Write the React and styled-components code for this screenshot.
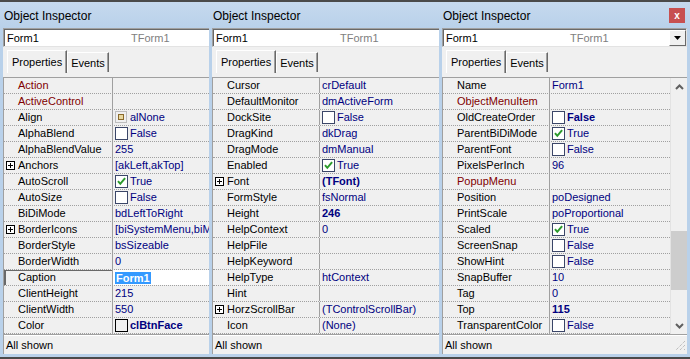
import React from 'react';
import styled, { createGlobalStyle } from 'styled-components';

const GlobalStyle = createGlobalStyle`
  html, body {
    margin: 0;
    padding: 0;
    background: #b9d1ea;
  }
  body {
    font-family: "Liberation Sans", Arial, sans-serif;
    font-size: 11px;
  }
`;

const panels = [
  {
    width: 206,
    nameWidth: 109,
    cut: true,
    rows: [
      { name: 'Action', event: true },
      { name: 'ActiveControl', event: true },
      { name: 'Align', kind: 'align', value: 'alNone' },
      { name: 'AlphaBlend', kind: 'check', checked: false, value: 'False' },
      { name: 'AlphaBlendValue', value: '255' },
      { name: 'Anchors', expand: true, value: '[akLeft,akTop]' },
      { name: 'AutoScroll', kind: 'check', checked: true, value: 'True' },
      { name: 'AutoSize', kind: 'check', checked: false, value: 'False' },
      { name: 'BiDiMode', value: 'bdLeftToRight' },
      { name: 'BorderIcons', expand: true, value: '[biSystemMenu,biMi' },
      { name: 'BorderStyle', value: 'bsSizeable' },
      { name: 'BorderWidth', value: '0' },
      { name: 'Caption', selected: true, value: 'Form1' },
      { name: 'ClientHeight', value: '215' },
      { name: 'ClientWidth', value: '550' },
      { name: 'Color', kind: 'color', value: 'clBtnFace', bold: true },
    ],
  },
  {
    width: 227,
    nameWidth: 107,
    cut: true,
    rows: [
      { name: 'Cursor', value: 'crDefault' },
      { name: 'DefaultMonitor', value: 'dmActiveForm' },
      { name: 'DockSite', kind: 'check', checked: false, value: 'False' },
      { name: 'DragKind', value: 'dkDrag' },
      { name: 'DragMode', value: 'dmManual' },
      { name: 'Enabled', kind: 'check', checked: true, value: 'True' },
      { name: 'Font', expand: true, value: '(TFont)', bold: true },
      { name: 'FormStyle', value: 'fsNormal' },
      { name: 'Height', value: '246', bold: true },
      { name: 'HelpContext', value: '0' },
      { name: 'HelpFile' },
      { name: 'HelpKeyword' },
      { name: 'HelpType', value: 'htContext' },
      { name: 'Hint' },
      { name: 'HorzScrollBar', expand: true, value: '(TControlScrollBar)' },
      { name: 'Icon', value: '(None)' },
    ],
  },
  {
    width: 245,
    nameWidth: 107,
    cut: false,
    closable: true,
    scroll: true,
    rows: [
      { name: 'Name', value: 'Form1' },
      { name: 'ObjectMenuItem', event: true },
      { name: 'OldCreateOrder', kind: 'check', checked: false, value: 'False', bold: true },
      { name: 'ParentBiDiMode', kind: 'check', checked: true, value: 'True' },
      { name: 'ParentFont', kind: 'check', checked: false, value: 'False' },
      { name: 'PixelsPerInch', value: '96' },
      { name: 'PopupMenu', event: true },
      { name: 'Position', value: 'poDesigned' },
      { name: 'PrintScale', value: 'poProportional' },
      { name: 'Scaled', kind: 'check', checked: true, value: 'True' },
      { name: 'ScreenSnap', kind: 'check', checked: false, value: 'False' },
      { name: 'ShowHint', kind: 'check', checked: false, value: 'False' },
      { name: 'SnapBuffer', value: '10' },
      { name: 'Tag', value: '0' },
      { name: 'Top', value: '115', bold: true },
      { name: 'TransparentColor', kind: 'check', checked: false, value: 'False' },
    ],
  },
];

const Window = styled.div`
  width: 690px;
  height: 359px;
  box-sizing: border-box;
  border-top: 2px solid #4a4a4a;
  border-bottom: 2px solid #4a4a4a;
  background: linear-gradient(#c6d9ee, #b9d1ea 26px);
  display: flex;
  gap: 3px;
  padding: 0 3px 3px;
`;

const Panel = styled.div`
  width: ${(p) => p.$width}px;
  flex: none;
  display: flex;
  flex-direction: column;
`;

const TitleBar = styled.div`
  height: 26px;
  flex: none;
  display: flex;
  align-items: center;
  justify-content: space-between;
  padding: 1px 0 0 1px;
  box-sizing: border-box;
  font-size: 12px;
  color: #000;
`;

const CloseButton = styled.div`
  width: 16px;
  height: 15px;
  margin: 0 2px 0 0;
  background: #c75050;
  color: #fff;
  font-weight: bold;
  font-size: 10px;
  display: flex;
  align-items: center;
  justify-content: center;
`;

const Body = styled.div`
  flex: 1;
  display: flex;
  flex-direction: column;
  background: #f0f0f0;
`;

const Combo = styled.div`
  height: 19px;
  box-sizing: border-box;
  display: flex;
  align-items: center;
  background: #fff;
  border-top: 1px solid #a0a0a0;
  border-left: 1px solid #a0a0a0;
  border-bottom: 1px solid #e3e3e3;
  border-right: ${(p) => (p.$cut ? 'none' : '1px solid #e3e3e3')};
  box-shadow: inset 1px 1px 0 #696969;
  padding-left: 3px;
  color: #000;
`;

const ComboName = styled.span`
  width: 124px;
  flex: none;
`;

const ComboType = styled.span`
  flex: 1;
  color: #808080;
`;

const DropButton = styled.div`
  width: 17px;
  height: 16px;
  margin-top: 1px;
  box-sizing: border-box;
  background: #f0f0f0;
  border-top: 1px solid #fff;
  border-left: 1px solid #fff;
  border-right: 1px solid #696969;
  border-bottom: 1px solid #696969;
  display: flex;
  align-items: center;
  justify-content: center;
`;

const TabStrip = styled.div`
  height: 29px;
  flex: none;
  display: flex;
  align-items: flex-start;
  padding: 3px 0 0 4px;
  box-sizing: border-box;
`;

const Tab = styled.div`
  height: ${(p) => (p.$active ? 23 : 20)}px;
  margin-top: ${(p) => (p.$active ? 0 : 2)}px;
  box-sizing: border-box;
  padding: 0 ${(p) => (p.$active ? 4 : 3)}px;
  display: flex;
  align-items: center;
  border-top: 1px solid #fff;
  border-left: 1px solid #fff;
  border-right: 1px solid #696969;
  box-shadow: inset -1px 0 0 #a0a0a0;
  color: #000;
`;

const GridArea = styled.div`
  flex: 1;
  display: flex;
  border-top: 1px solid #a0a0a0;
  border-left: 1px solid #a0a0a0;
  margin-top: 1px;
`;

const Rows = styled.div`
  flex: 1;
  display: flex;
  flex-direction: column;
  min-width: 0;
`;

const Row = styled.div`
  display: grid;
  grid-template-columns: ${(p) => p.$nameWidth}px 1fr;
  height: 16px;
  box-sizing: border-box;
  border-bottom: 1px dotted #a0a0a0;
  line-height: 15px;
`;

const NameCell = styled.div`
  display: flex;
  align-items: center;
  padding-left: 2px;
  border-right: 1px solid #a0a0a0;
  color: ${(p) => (p.$event ? '#800000' : '#000')};
  white-space: nowrap;
  overflow: hidden;
  ${(p) => p.$selected && 'box-shadow: inset 2px 1px 0 #696969;'}
`;

const ExpandSlot = styled.span`
  width: 12px;
  flex: none;
  display: flex;
  align-items: center;
`;

const ValueCell = styled.div`
  display: flex;
  align-items: center;
  gap: 2px;
  padding-left: 2px;
  color: #000080;
  font-weight: ${(p) => (p.$bold ? 'bold' : 'normal')};
  background: ${(p) => (p.$selected ? '#fff' : 'transparent')};
  white-space: nowrap;
  overflow: hidden;
`;

const Highlight = styled.span`
  background: #3399ff;
  color: #fff;
  font-weight: bold;
  line-height: 12px;
  padding: 0 1px;
`;

const ScrollBar = styled.div`
  width: 16px;
  flex: none;
  display: flex;
  flex-direction: column;
  border-left: 1px solid #e3e3e3;
`;

const ArrowButton = styled.div`
  height: 17px;
  flex: none;
  display: flex;
  align-items: center;
  justify-content: center;
`;

const Track = styled.div`
  flex: 1;
`;

const Thumb = styled.div`
  margin: ${(p) => p.$offset}px 0 0 0;
  height: ${(p) => p.$size}px;
  background: #cdcdcd;
`;

const StatusBar = styled.div`
  height: 20px;
  flex: none;
  box-sizing: border-box;
  display: flex;
  align-items: center;
  justify-content: space-between;
  padding-left: 2px;
  border-top: 1px solid #a0a0a0;
  border-left: 1px solid #a0a0a0;
  box-shadow: inset 0 1px 0 #fff;
  color: #000;
`;

const PlusBox = () => (
  <svg width="9" height="9" viewBox="0 0 9 9">
    <rect x="0.5" y="0.5" width="8" height="8" fill="#fff" stroke="#000" />
    <path d="M2 4.5h5M4.5 2v5" stroke="#000" />
  </svg>
);

const CheckBox = ({ checked }) => (
  <svg width="13" height="13" viewBox="0 0 13 13">
    <rect x="0.5" y="0.5" width="12" height="12" fill="#fff" stroke="#3b4668" />
    {checked && (
      <path d="M3 6.2l2.3 2.6 4.8-5.6" fill="none" stroke="#2c9a2c" strokeWidth="2" />
    )}
  </svg>
);

const AlignIcon = () => (
  <svg width="13" height="13" viewBox="0 0 13 13">
    <rect x="0.5" y="0.5" width="11" height="11" fill="none" stroke="#8a8a8a" strokeDasharray="1 1" />
    <rect x="3.5" y="3.5" width="5" height="5" fill="#e8d8a0" stroke="#8b6a2b" />
  </svg>
);

const ColorSwatch = () => (
  <svg width="13" height="13" viewBox="0 0 13 13">
    <rect x="0.5" y="0.5" width="12" height="12" fill="#f0f0f0" stroke="#000" />
  </svg>
);

const Chevron = ({ down }) => (
  <svg width="9" height="6" viewBox="0 0 9 6">
    <path d={down ? 'M1 1l3.5 3.5L8 1' : 'M1 5l3.5-3.5L8 5'} fill="none" stroke="#606060" strokeWidth="2" />
  </svg>
);

const Grip = () => (
  <svg width="12" height="12" viewBox="0 0 12 12" style={{ marginRight: 1 }}>
    <path d="M11 2L2 11M11 6L6 11M11 10L10 11" stroke="#a8a8a8" strokeDasharray="1 1" />
  </svg>
);

const renderValue = (row) => {
  if (row.selected) return <Highlight>{row.value}</Highlight>;
  return (
    <>
      {row.kind === 'check' && <CheckBox checked={row.checked} />}
      {row.kind === 'align' && <AlignIcon />}
      {row.kind === 'color' && <ColorSwatch />}
      {row.value && <span>{row.value}</span>}
    </>
  );
};

const Inspector = ({ panel }) => (
  <Panel $width={panel.width}>
    <TitleBar>
      <span>Object Inspector</span>
      {panel.closable && <CloseButton>x</CloseButton>}
    </TitleBar>
    <Body>
      <Combo $cut={panel.cut}>
        <ComboName>Form1</ComboName>
        <ComboType>TForm1</ComboType>
        {!panel.cut && (
          <DropButton>
            <svg width="7" height="4" viewBox="0 0 7 4">
              <path d="M0 0h7L3.5 4z" fill="#000" />
            </svg>
          </DropButton>
        )}
      </Combo>
      <TabStrip>
        <Tab $active>Properties</Tab>
        <Tab>Events</Tab>
      </TabStrip>
      <GridArea>
        <Rows>
          {panel.rows.map((row) => (
            <Row key={row.name} $nameWidth={panel.nameWidth}>
              <NameCell $event={row.event} $selected={row.selected}>
                <ExpandSlot>{row.expand && <PlusBox />}</ExpandSlot>
                {row.name}
              </NameCell>
              <ValueCell $bold={row.bold} $selected={row.selected}>
                {renderValue(row)}
              </ValueCell>
            </Row>
          ))}
        </Rows>
        {panel.scroll && (
          <ScrollBar>
            <ArrowButton><Chevron /></ArrowButton>
            <Track>
              <Thumb $offset={136} $size={59} />
            </Track>
            <ArrowButton><Chevron down /></ArrowButton>
          </ScrollBar>
        )}
      </GridArea>
      <StatusBar>
        <span>All shown</span>
        {panel.scroll && <Grip />}
      </StatusBar>
    </Body>
  </Panel>
);

export default function App() {
  return (
    <>
      <GlobalStyle />
      <Window>
        {panels.map((panel, i) => (
          <Inspector key={i} panel={panel} />
        ))}
      </Window>
    </>
  );
}
